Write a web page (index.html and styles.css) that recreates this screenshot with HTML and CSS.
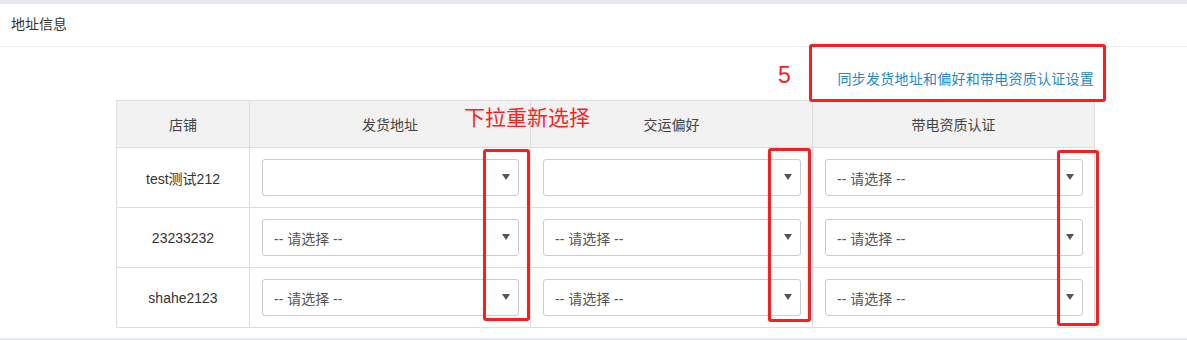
FILE: index.html
```html
<!DOCTYPE html>
<html lang="zh">
<head>
<meta charset="utf-8">
<link rel="stylesheet" href="styles.css">
</head>
<body>
<div class="panel">
  <div class="panel-head">地址信息</div>
  <div class="panel-body">
    <div class="link-row"><a class="sync-link" href="#">同步发货地址和偏好和带电资质认证设置</a></div>
    <table class="grid">
      <colgroup><col class="c1"><col class="c2"><col class="c3"><col class="c4"></colgroup>
      <thead>
        <tr><th>店铺</th><th>发货地址</th><th>交运偏好</th><th>带电资质认证</th></tr>
      </thead>
      <tbody>
        <tr>
          <td class="shop">test测试212</td>
          <td><div class="sel"><span></span><i class="caret"></i></div></td>
          <td><div class="sel"><span></span><i class="caret"></i></div></td>
          <td><div class="sel"><span>-- 请选择 --</span><i class="caret"></i></div></td>
        </tr>
        <tr>
          <td class="shop">23233232</td>
          <td><div class="sel"><span>-- 请选择 --</span><i class="caret"></i></div></td>
          <td><div class="sel"><span>-- 请选择 --</span><i class="caret"></i></div></td>
          <td><div class="sel"><span>-- 请选择 --</span><i class="caret"></i></div></td>
        </tr>
        <tr>
          <td class="shop">shahe2123</td>
          <td><div class="sel"><span>-- 请选择 --</span><i class="caret"></i></div></td>
          <td><div class="sel"><span>-- 请选择 --</span><i class="caret"></i></div></td>
          <td><div class="sel"><span>-- 请选择 --</span><i class="caret"></i></div></td>
        </tr>
      </tbody>
    </table>
  </div>
</div>
<div class="note note-num">5</div>
<div class="note note-text">下拉重新选择</div>
<div class="mark mark-link"></div>
<div class="mark mark-col1"></div>
<div class="mark mark-col2"></div>
<div class="mark mark-col3"></div>
</body>
</html>
```
FILE: styles.css
```css
html, body {
  margin: 0;
  padding: 0;
}
body {
  background: #e6eaf0;
  font-family: "Liberation Sans", "Noto Sans CJK SC", sans-serif;
  font-size: 14px;
  color: #333;
  width: 1187px;
  height: 340px;
  overflow: hidden;
  position: relative;
}
.panel {
  margin-top: 4px;
  background: #fff;
  height: 334px;
}
.panel-head {
  height: 42px;
  line-height: 40px;
  padding-left: 11px;
  border-bottom: 1px solid #eeeeee;
  color: #333;
}
.panel-body {
  padding-left: 116px;
}
.link-row {
  width: 978px;
  height: 53px;
  display: flex;
  justify-content: flex-end;
  align-items: flex-start;
}
.sync-link {
  margin-top: 23px;
  color: #1f88d0;
  text-decoration: none;
  line-height: 18px;
  letter-spacing: 0.25px;
}
.grid {
  width: 979px;
  border-collapse: collapse;
  table-layout: fixed;
}
.c1 { width: 133px; }
.c2 { width: 281px; }
.c3 { width: 282px; }
.c4 { width: 282px; }
.grid th, .grid td {
  border: 1px solid #dddddd;
  padding: 0;
}
.grid th {
  height: 46px;
  background: #f2f2f2;
  font-weight: normal;
  color: #444;
  text-align: center;
  vertical-align: middle;
}
.grid td {
  height: 59px;
  padding: 0 11px 0 12px;
  vertical-align: middle;
}
.grid td.shop {
  text-align: center;
  padding: 0;
  color: #333;
}
.sel {
  height: 35px;
  border: 1px solid #cccccc;
  border-radius: 3px;
  display: flex;
  align-items: center;
  justify-content: space-between;
  padding: 0 8px 0 11px;
  color: #555;
  background: #fff;
  box-sizing: content-box;
}
.caret {
  width: 0;
  height: 0;
  border-left: 4px solid transparent;
  border-right: 4px solid transparent;
  border-top: 6px solid #555;
  margin-top: -2px;
}
.note {
  position: absolute;
  color: #ff1e1e;
  font-family: "Noto Sans CJK SC", "Liberation Sans", sans-serif;
}
.note-num {
  left: 778px;
  top: 60px;
  font-size: 23px;
  line-height: 30px;
  font-family: "Liberation Sans", sans-serif;
}
.note-text {
  left: 464px;
  top: 102px;
  font-size: 21px;
  line-height: 28px;
}
.mark {
  position: absolute;
  border: 3px solid #fa1e1e;
  border-radius: 3px;
  box-sizing: border-box;
}
.mark-link { left: 809px; top: 44px; width: 297px; height: 58px; }
.mark-col1 { left: 483px; top: 149px; width: 47px; height: 172px; }
.mark-col2 { left: 768px; top: 148px; width: 43px; height: 174px; }
.mark-col3 { left: 1057px; top: 150px; width: 42px; height: 176px; }
```
